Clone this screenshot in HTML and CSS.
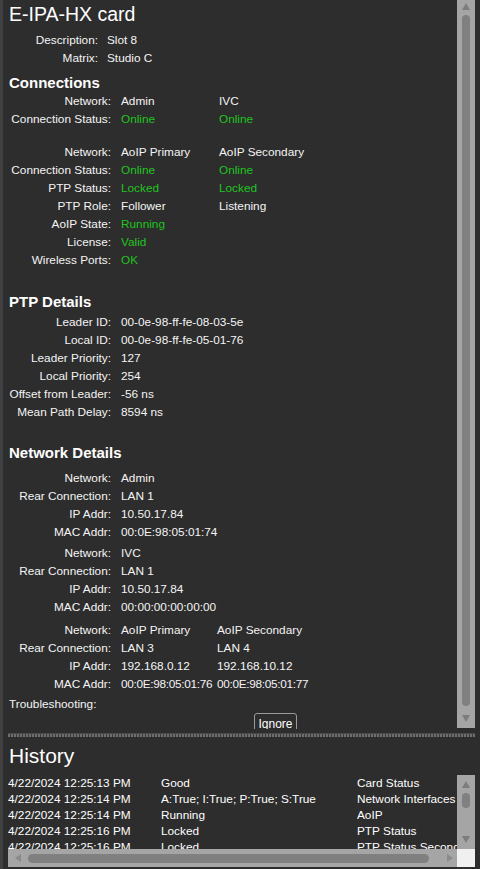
FILE: index.html
```html
<!DOCTYPE html>
<html>
<head>
<meta charset="utf-8">
<link rel="stylesheet" href="styles.css">
</head>
<body>
<div class="app">
  <div class="top">
    <div class="content">
      <h1 class="title">E-IPA-HX card</h1>
      <div class="kv kv-desc">
        <span class="k">Description:</span><span class="v">Slot 8</span>
        <span class="k">Matrix:</span><span class="v">Studio C</span>
      </div>

      <h2 class="sec sec-conn">Connections</h2>
      <div class="kv kv-conn">
        <span class="k">Network:</span><span class="v">Admin</span><span class="v">IVC</span>
        <span class="k">Connection Status:</span><span class="v ok">Online</span><span class="v ok">Online</span>
      </div>
      <div class="kv kv-conn grp-gap">
        <span class="k">Network:</span><span class="v">AoIP Primary</span><span class="v">AoIP Secondary</span>
        <span class="k">Connection Status:</span><span class="v ok">Online</span><span class="v ok">Online</span>
        <span class="k">PTP Status:</span><span class="v ok">Locked</span><span class="v ok">Locked</span>
        <span class="k">PTP Role:</span><span class="v">Follower</span><span class="v">Listening</span>
        <span class="k">AoIP State:</span><span class="v ok">Running</span><span class="v"></span>
        <span class="k">License:</span><span class="v ok">Valid</span><span class="v"></span>
        <span class="k">Wireless Ports:</span><span class="v ok">OK</span><span class="v"></span>
      </div>

      <h2 class="sec sec-ptp">PTP Details</h2>
      <div class="kv kv-ptp">
        <span class="k">Leader ID:</span><span class="v">00-0e-98-ff-fe-08-03-5e</span>
        <span class="k">Local ID:</span><span class="v">00-0e-98-ff-fe-05-01-76</span>
        <span class="k">Leader Priority:</span><span class="v">127</span>
        <span class="k">Local Priority:</span><span class="v">254</span>
        <span class="k">Offset from Leader:</span><span class="v">-56 ns</span>
        <span class="k">Mean Path Delay:</span><span class="v">8594 ns</span>
      </div>

      <h2 class="sec sec-net">Network Details</h2>
      <div class="kv kv-net">
        <span class="k">Network:</span><span class="v">Admin</span><span class="v"></span>
        <span class="k">Rear Connection:</span><span class="v">LAN 1</span><span class="v"></span>
        <span class="k">IP Addr:</span><span class="v">10.50.17.84</span><span class="v"></span>
        <span class="k">MAC Addr:</span><span class="v">00:0E:98:05:01:74</span><span class="v"></span>
      </div>
      <div class="kv kv-net gap3">
        <span class="k">Network:</span><span class="v">IVC</span><span class="v"></span>
        <span class="k">Rear Connection:</span><span class="v">LAN 1</span><span class="v"></span>
        <span class="k">IP Addr:</span><span class="v">10.50.17.84</span><span class="v"></span>
        <span class="k">MAC Addr:</span><span class="v">00:00:00:00:00:00</span><span class="v"></span>
      </div>
      <div class="kv kv-net gap5">
        <span class="k">Network:</span><span class="v">AoIP Primary</span><span class="v">AoIP Secondary</span>
        <span class="k">Rear Connection:</span><span class="v">LAN 3</span><span class="v">LAN 4</span>
        <span class="k">IP Addr:</span><span class="v">192.168.0.12</span><span class="v">192.168.10.12</span>
        <span class="k">MAC Addr:</span><span class="v mac">00:0E:98:05:01:76</span><span class="v mac">00:0E:98:05:01:77</span>
      </div>
      <div class="trouble">Troubleshooting:</div>
      <div class="btn-row"><button class="btn">Ignore</button></div>
    </div>
    <div class="vscroll main-vs">
      <span class="arr arr-up"></span>
      <span class="thumb-v main-thumb"></span>
      <span class="arr arr-down"></span>
    </div>
  </div>

  <div class="splitter"></div>

  <div class="history">
    <div class="hist-title">History</div>
    <div class="hist-box">
      <div class="hist-main">
        <div class="hist-list">
          <div class="hrow"><span>4/22/2024 12:25:13 PM</span><span>Good</span><span>Card Status</span></div>
          <div class="hrow"><span>4/22/2024 12:25:14 PM</span><span>A:True; I:True; P:True; S:True</span><span>Network Interfaces</span></div>
          <div class="hrow"><span>4/22/2024 12:25:14 PM</span><span>Running</span><span>AoIP</span></div>
          <div class="hrow"><span>4/22/2024 12:25:16 PM</span><span>Locked</span><span>PTP Status</span></div>
          <div class="hrow"><span>4/22/2024 12:25:16 PM</span><span>Locked</span><span>PTP Status Secondary</span></div>
        </div>
        <div class="vscroll hist-vs">
          <span class="arr arr-up"></span>
          <span class="thumb-v hist-thumb"></span>
          <span class="spacer"></span>
          <span class="arr arr-down"></span>
        </div>
      </div>
      <div class="hist-bottom">
        <div class="hscroll">
          <span class="arr arr-left"></span>
          <span class="thumb-h"></span>
          <span class="arr arr-right"></span>
        </div>
        <div class="corner"></div>
      </div>
    </div>
  </div>
</div>
</body>
</html>
```

FILE: styles.css
```css
html, body {
  margin: 0;
  padding: 0;
  background: #2d2d2d;
}
body {
  width: 480px;
  height: 869px;
  overflow: hidden;
  font-family: "Liberation Sans", Arial, sans-serif;
  font-size: 11.8px;
  color: #f4f4f4;
}
.app {
  height: 869px;
  border-left: 3px solid #414141;
  box-sizing: border-box;
  display: flex;
  flex-direction: column;
}
.top {
  height: 729px;
  display: flex;
  padding-right: 5px;
  overflow: hidden;
}
.content {
  flex: 1;
  overflow: hidden;
  height: 729px;
}
.title {
  margin: 0 0 3px 6px;
  font-size: 19.5px;
  font-weight: normal;
  line-height: 28px;
  color: #ffffff;
}
.sec {
  margin: 0 0 0 6px;
  font-size: 15px;
  font-weight: bold;
  line-height: 18px;
  color: #ffffff;
}
.sec-conn { margin-top: 7px; }
.sec-ptp { margin-top: 24px; margin-bottom: 2px; }
.sec-net { margin-top: 23px; margin-bottom: 7px; }

.kv {
  display: grid;
  line-height: 18px;
  column-gap: 10px;
}
.kv .k { text-align: right; white-space: nowrap; }
.kv .v { white-space: nowrap; }
.kv-desc { grid-template-columns: 95px auto; column-gap: 9px; }
.kv-conn { grid-template-columns: 108px 88px auto; }
.kv-ptp { grid-template-columns: 108px auto; }
.kv-net { grid-template-columns: 108px 86px auto; }
.mac { letter-spacing: -0.3px; }
.grp-gap { margin-top: 15px; }
.gap3 { margin-top: 3px; }
.gap5 { margin-top: 5px; }
.ok { color: #1fc41f; }

.trouble {
  margin: 2px 0 0 6px;
  line-height: 18px;
}
.btn-row {
  padding-left: 251px;
}
.btn {
  display: block;
  width: 43px;
  height: 22px;
  padding: 0;
  margin: 0;
  background: #2d2d2d;
  border: 1px solid #9a9a9a;
  border-radius: 3px;
  color: #ffffff;
  font-family: "Liberation Sans", Arial, sans-serif;
  font-size: 12px;
  line-height: 18px;
}

.vscroll {
  width: 18px;
  background: #a5a5a5;
  display: flex;
  flex-direction: column;
  align-items: center;
  box-sizing: border-box;
}
.main-vs {
  height: 728px;
  padding: 3px 0 5px;
}
.thumb-v {
  width: 8px;
  background: #808080;
  border-radius: 4px;
}
.main-thumb {
  margin-top: 5px;
  height: 691px;
  margin-bottom: 9px;
}
.arr {
  width: 0;
  height: 0;
  border-style: solid;
}
.arr-up {
  border-width: 0 4px 7px 4px;
  border-color: transparent transparent #7d7d7d transparent;
}
.arr-down {
  border-width: 7px 4px 0 4px;
  border-color: #7d7d7d transparent transparent transparent;
}
.arr-left {
  border-width: 4px 6px 4px 0;
  border-color: transparent #8a8a8a transparent transparent;
}
.arr-right {
  border-width: 4px 0 4px 6px;
  border-color: transparent transparent transparent #8a8a8a;
}

.splitter {
  margin: 4px 5px 0 5px;
  height: 4px;
  background:
    repeating-linear-gradient(90deg, #6e6e6e 0 2px, #3a3a3a 2px 3px);
  border-top: 1px solid #4a4a4a;
  box-sizing: border-box;
}

.history {
  padding: 0 5px 0 5px;
}
.hist-title {
  height: 38px;
  line-height: 38px;
  padding-left: 1px;
  font-size: 21px;
  color: #ffffff;
}
.hist-box {
  display: flex;
  flex-direction: column;
}
.hist-main {
  display: flex;
  height: 74px;
}
.hist-list {
  flex: 1;
  overflow: hidden;
  padding-top: 0;
}
.hrow {
  display: grid;
  grid-template-columns: 153px 196px auto;
  line-height: 16px;
  white-space: nowrap;
  color: #ffffff;
}
.hrow span { overflow: hidden; }
.hist-vs {
  height: 74px;
  padding: 6px 0 6px;
}
.hist-thumb {
  height: 15px;
  margin-top: 5px;
}
.spacer { flex: 1; }
.hist-bottom {
  display: flex;
  height: 18px;
}
.hscroll {
  flex: 1;
  background: #a5a5a5;
  display: flex;
  align-items: center;
  padding: 0 4px 0 7px;
}
.thumb-h {
  flex: 1;
  height: 9px;
  background: #808080;
  border-radius: 5px;
  margin: 0 18px 0 7px;
}
.corner {
  width: 18px;
  background: #f0f0f0;
}
```
